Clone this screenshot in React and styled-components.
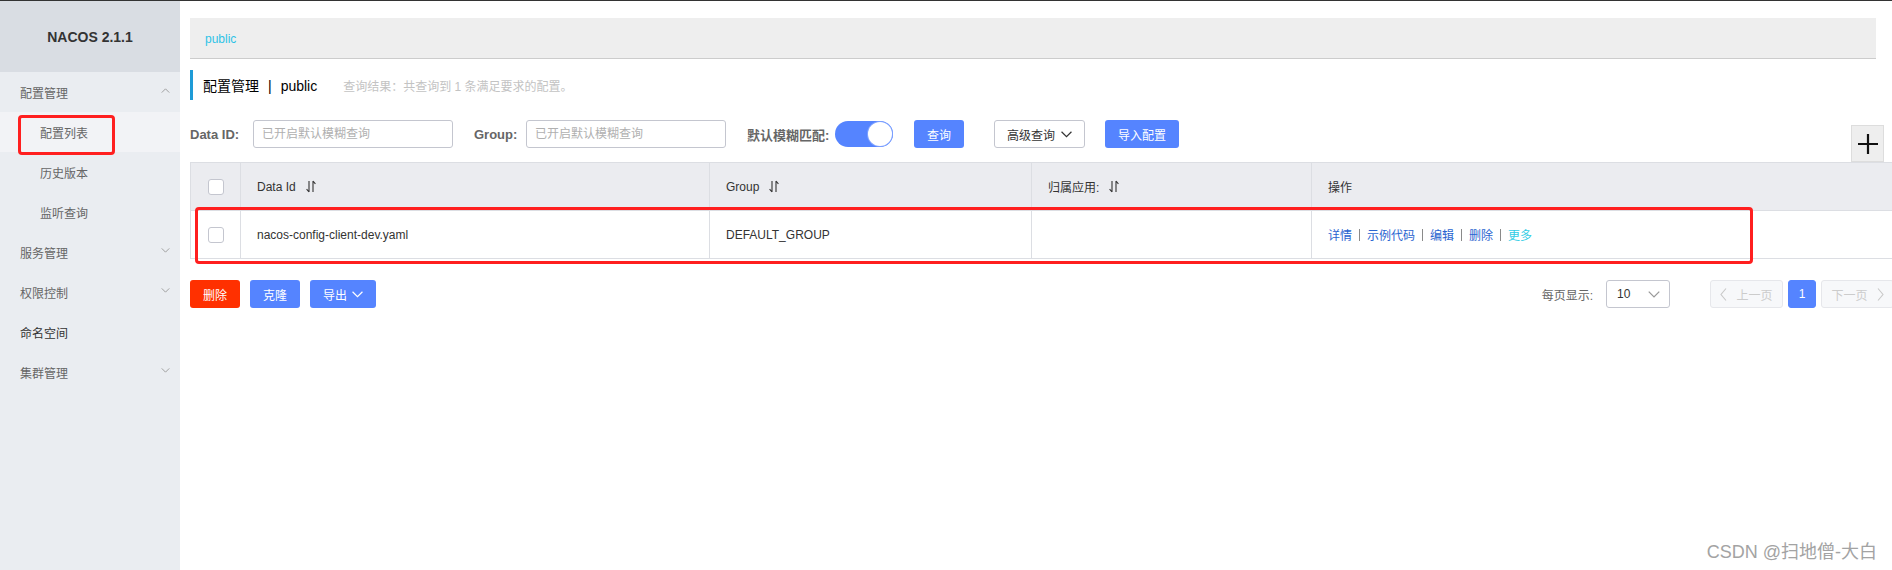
import React from 'react';
import styled, { createGlobalStyle } from 'styled-components';

const GlobalStyle = createGlobalStyle`
   html, body {
      margin: 0;
      padding: 0;
   }
   body {
      width: 1892px;
      height: 570px;
      overflow: hidden;
      background: #fff;
      color: #333;
      font-family: "Liberation Sans", "Noto Sans CJK SC", sans-serif;
      font-size: 12px;
   }
   * {
      box-sizing: border-box;
   }
`;

const Chevron = ({ up, color = '#999', w = 9, h = 5 }) => (
   <svg width={w} height={h} viewBox="0 0 10 6" fill="none">
      <polyline
         points={up ? '0.5,5.5 5,1 9.5,5.5' : '0.5,0.5 5,5 9.5,0.5'}
         stroke={color}
         strokeWidth="1.1"
      />
   </svg>
);

const SideChevron = ({ left }) => (
   <svg width="7" height="13" viewBox="0 0 7 13" fill="none">
      <polyline
         points={left ? '6,0.5 1,6.5 6,12.5' : '1,0.5 6,6.5 1,12.5'}
         stroke="#c8c8c8"
         strokeWidth="1.1"
      />
   </svg>
);

const SortIcon = () => (
   <svg width="10" height="13" viewBox="0 0 10 13" fill="none">
      <path d="M3 1v11M3 12L0.6 9.2" stroke="#333" strokeWidth="1.1" />
      <path d="M7 12V1M7 1l2.4 2.8" stroke="#333" strokeWidth="1.1" />
   </svg>
);

const menu = [
   { label: '配置管理', arrow: 'up' },
   { label: '配置列表', sub: true, active: true },
   { label: '历史版本', sub: true },
   { label: '监听查询', sub: true },
   { label: '服务管理', arrow: 'down' },
   { label: '权限控制', arrow: 'down' },
   { label: '命名空间', dark: true },
   { label: '集群管理', arrow: 'down' },
];

const columns = [
   { title: 'Data Id', sort: true },
   { title: 'Group', sort: true },
   { title: '归属应用:', sort: true },
   { title: '操作' },
];

const actions = ['详情', '示例代码', '编辑', '删除'];

const App = () => {
   return (
      <>
         <GlobalStyle />
         <Page>
            <Sidebar>
               <Logo>NACOS 2.1.1</Logo>
               {menu.map((item) => (
                  <MenuItem
                     key={item.label}
                     $sub={item.sub}
                     $active={item.active}
                     $dark={item.dark}
                  >
                     <span>{item.label}</span>
                     {item.arrow && <Chevron up={item.arrow === 'up'} />}
                     {item.active && <MarkBox />}
                  </MenuItem>
               ))}
            </Sidebar>
            <Main>
               <Crumb>public</Crumb>
               <TitleBar>
                  <Title>
                     配置管理<Divider>|</Divider>public
                  </Title>
                  <Hint>查询结果：共查询到 1 条满足要求的配置。</Hint>
               </TitleBar>
               <SearchRow>
                  <Controls>
                     <Field>
                        <Label $w={63}>Data ID:</Label>
                        <Input placeholder="已开启默认模糊查询" />
                     </Field>
                     <Field>
                        <Label $w={52}>Group:</Label>
                        <Input placeholder="已开启默认模糊查询" />
                     </Field>
                     <Field>
                        <Label $w={88}>默认模糊匹配:</Label>
                        <Toggle>
                           <Knob />
                        </Toggle>
                     </Field>
                     <Button $w={50}>查询</Button>
                     <OutlineButton>
                        高级查询
                        <Chevron color="#333" w={11} h={7} />
                     </OutlineButton>
                     <Button $w={74}>导入配置</Button>
                  </Controls>
                  <PlusButton>
                     <svg width="20" height="20" viewBox="0 0 20 20">
                        <path d="M10 0v20M0 10h20" stroke="#111" strokeWidth="2.2" />
                     </svg>
                  </PlusButton>
               </SearchRow>
               <Table>
                  <Row $head>
                     <Cell $center>
                        <Checkbox />
                     </Cell>
                     {columns.map((col) => (
                        <Cell key={col.title}>
                           {col.title}
                           {col.sort && <SortIcon />}
                        </Cell>
                     ))}
                  </Row>
                  <Row>
                     <Cell $center>
                        <Checkbox />
                     </Cell>
                     <Cell>nacos-config-client-dev.yaml</Cell>
                     <Cell>DEFAULT_GROUP</Cell>
                     <Cell />
                     <Cell>
                        {actions.map((a) => (
                           <React.Fragment key={a}>
                              <Link>{a}</Link>
                              <Sep />
                           </React.Fragment>
                        ))}
                        <Link $more>更多</Link>
                     </Cell>
                  </Row>
                  <RowMark />
               </Table>
               <BottomBar>
                  <Actions>
                     <Button $w={50} $danger>
                        删除
                     </Button>
                     <Button $w={50}>克隆</Button>
                     <Button $w={66}>
                        导出
                        <Chevron color="#fff" w={11} h={7} />
                     </Button>
                  </Actions>
                  <Pager>
                     <PagerLabel>每页显示:</PagerLabel>
                     <Select>
                        10
                        <Chevron color="#999" w={12} h={7} />
                     </Select>
                     <PageButton $disabled>
                        <SideChevron left />
                        上一页
                     </PageButton>
                     <PageButton $current>1</PageButton>
                     <PageButton $disabled>
                        下一页
                        <SideChevron />
                     </PageButton>
                  </Pager>
               </BottomBar>
            </Main>
            <Watermark>CSDN @扫地僧-大白</Watermark>
         </Page>
      </>
   );
};

const Page = styled.div`
   position: relative;
   display: flex;
   width: 1892px;
   height: 570px;
   border-top: 1px solid #333;
   overflow: hidden;
`;
const Sidebar = styled.aside`
   width: 180px;
   flex-shrink: 0;
   background-color: #eaedf1;
`;
const Logo = styled.div`
   height: 71px;
   display: flex;
   align-items: center;
   justify-content: center;
   background-color: #d9dde3;
   color: #333;
   font-size: 14px;
   font-weight: bold;
`;
const MenuItem = styled.div`
   position: relative;
   height: 40px;
   display: flex;
   align-items: center;
   justify-content: space-between;
   padding: 0 10px 0 ${(p) => (p.$sub ? 40 : 20)}px;
   color: ${(p) => (p.$dark ? '#333' : '#666')};
   background-color: ${(p) => (p.$active ? '#f2f3f6' : 'transparent')};
   font-size: 12px;

   svg {
      margin-top: -4px;
   }
`;
const MarkBox = styled.div`
   position: absolute;
   left: 18px;
   top: 3px;
   width: 97px;
   height: 40px;
   border: 3px solid #ff1f1f;
   border-radius: 4px;
`;
const Main = styled.main`
   flex: 1;
   min-width: 0;
   padding-left: 10px;
   display: flex;
   flex-direction: column;
`;
const Crumb = styled.div`
   margin: 17px 16px 0 0;
   height: 41px;
   padding: 2px 0 0 15px;
   display: flex;
   align-items: center;
   background-color: #eee;
   border-bottom: 1px solid #ccc;
   color: #2ec3e6;
   font-size: 12px;
`;
const TitleBar = styled.div`
   margin-top: 11px;
   height: 30px;
   display: flex;
   align-items: center;
   padding-left: 10px;
   border-left: 3px solid #1e9bd7;
`;
const Title = styled.h2`
   margin: 0;
   font-size: 14px;
   font-weight: normal;
   color: #000;
`;
const Divider = styled.span`
   margin: 0 9px;
`;
const Hint = styled.span`
   margin-left: 26px;
   color: #c3c3c3;
   font-size: 12px;
`;
const SearchRow = styled.div`
   margin-top: 20px;
   height: 42px;
   display: flex;
   justify-content: space-between;
`;
const Controls = styled.div`
   height: 28px;
   display: flex;
   align-items: center;
`;
const Field = styled.div`
   display: flex;
   align-items: center;
   margin-right: 21px;
`;
const Label = styled.label`
   width: ${(p) => p.$w}px;
   color: #666;
   font-size: 13px;
   font-weight: bold;
   white-space: nowrap;
`;
const Input = styled.input`
   width: 200px;
   height: 28px;
   padding: 0 8px;
   border: 1px solid #c4c6cf;
   border-radius: 3px;
   outline: 0;
   font-family: inherit;
   font-size: 12px;
   color: #333;

   &::placeholder {
      color: #b0b0b0;
   }
`;
const Toggle = styled.div`
   width: 58px;
   height: 26px;
   border-radius: 13px;
   background-color: #5584ff;
   display: flex;
   justify-content: flex-end;
   align-items: center;
   padding: 0 1px;
`;
const Knob = styled.div`
   width: 24px;
   height: 24px;
   border-radius: 50%;
   background-color: #fff;
   box-shadow: 0 0 0 1px #7fa2ff;
`;
const Button = styled.button`
   width: ${(p) => p.$w}px;
   height: 28px;
   display: inline-flex;
   align-items: center;
   justify-content: center;
   gap: 5px;
   padding: 0;
   border: 0;
   border-radius: 3px;
   background-color: ${(p) => (p.$danger ? '#ff3000' : '#5584ff')};
   color: #fff;
   font-family: inherit;
   font-size: 12px;
   flex-shrink: 0;
`;
const OutlineButton = styled.button`
   width: 91px;
   height: 28px;
   margin: 0 20px 0 30px;
   display: inline-flex;
   align-items: center;
   justify-content: center;
   gap: 6px;
   padding: 0;
   border: 1px solid #c4c6cf;
   border-radius: 3px;
   background-color: #fff;
   color: #333;
   font-family: inherit;
   font-size: 12px;
`;
const PlusButton = styled.div`
   align-self: flex-end;
   width: 33px;
   height: 37px;
   margin-right: 8px;
   display: flex;
   align-items: center;
   justify-content: center;
   background-color: #eee;
   border: 1px solid #ddd;
`;
const Table = styled.div`
   position: relative;
   border-top: 1px solid #dcdee3;
   border-left: 1px solid #dcdee3;
`;
const Row = styled.div`
   display: grid;
   grid-template-columns: 50px 469px 322px 280px 1fr;
   background-color: ${(p) => (p.$head ? '#ebecf0' : '#fff')};
`;
const Cell = styled.div`
   height: 48px;
   display: flex;
   align-items: center;
   justify-content: ${(p) => (p.$center ? 'center' : 'flex-start')};
   gap: 10px;
   padding-left: ${(p) => (p.$center ? 0 : 16)}px;
   border-right: 1px solid #dcdee3;
   border-bottom: 1px solid #dcdee3;
   color: #333;
   font-size: 12px;
   white-space: nowrap;

   &:last-child {
      border-right: 0;
   }
`;
const Checkbox = styled.span`
   width: 16px;
   height: 16px;
   border: 1px solid #c4c6cf;
   border-radius: 3px;
   background-color: #fff;
`;
const Link = styled.a`
   color: ${(p) => (p.$more ? '#33cde5' : '#2a64d0')};
   cursor: pointer;
`;
const Sep = styled.span`
   width: 1px;
   height: 12px;
   margin: 0 -3px;
   background-color: #8a8a8a;
`;
const RowMark = styled.div`
   position: absolute;
   left: 4px;
   top: 44px;
   width: 1558px;
   height: 57px;
   border: 3px solid #ff1f1f;
   border-radius: 4px;
`;
const BottomBar = styled.div`
   margin-top: 21px;
   margin-right: -2px;
   display: flex;
   justify-content: space-between;
   align-items: center;
`;
const Actions = styled.div`
   display: flex;
   gap: 10px;
`;
const Pager = styled.div`
   display: flex;
   align-items: center;
   gap: 5px;
`;
const PagerLabel = styled.span`
   color: #666;
   font-size: 12px;
   margin-right: 8px;
`;
const Select = styled.div`
   width: 64px;
   height: 28px;
   margin-right: 35px;
   display: flex;
   align-items: center;
   justify-content: space-between;
   padding: 0 9px 0 10px;
   border: 1px solid #c4c6cf;
   border-radius: 3px;
   color: #333;
   font-size: 12px;
`;
const PageButton = styled.div`
   width: ${(p) => (p.$current ? 28 : 73)}px;
   height: 28px;
   display: flex;
   align-items: center;
   justify-content: center;
   gap: 9px;
   border: 1px solid ${(p) => (p.$current ? '#5584ff' : '#e6e7eb')};
   border-radius: 3px;
   background-color: ${(p) => (p.$current ? '#5584ff' : '#f7f8fa')};
   color: ${(p) => (p.$current ? '#fff' : '#ccc')};
   font-size: 12px;
`;
const Watermark = styled.div`
   position: absolute;
   right: 15px;
   bottom: 7px;
   color: #a3a3a3;
   font-family: "Liberation Sans", "Noto Sans CJK SC", sans-serif;
   font-size: 18px;
   text-shadow: 0 0 1px #fff;
`;

export default App;
